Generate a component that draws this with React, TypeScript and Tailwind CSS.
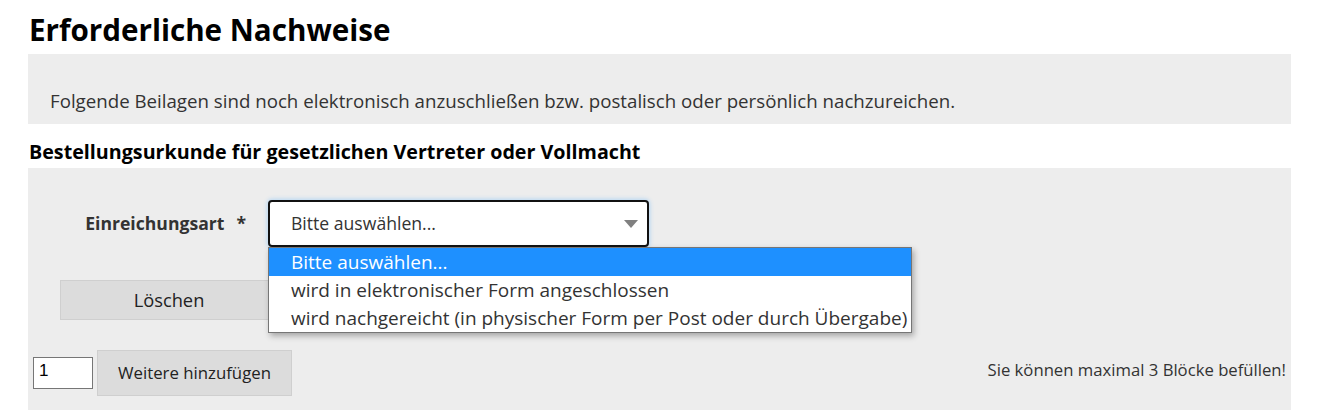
const options = [
  "Bitte auswählen...",
  "wird in elektronischer Form angeschlossen",
  "wird nachgereicht (in physischer Form per Post oder durch Übergabe)",
];

export default function App() {
  return (
    <div className="w-[1324px] h-[410px] overflow-hidden bg-white pl-[28px] pr-[33px] font-['Open_Sans',sans-serif] text-[#333]">
      <h1 className="pt-[12px] h-[54px] pl-px text-[29.6px] leading-[36px] font-bold text-black">
        Erforderliche Nachweise
      </h1>

      <div className="h-[70px] bg-[#ededed] pl-[22px] pt-[35px] text-[18.7px] leading-[24px]">
        Folgende Beilagen sind noch elektronisch anzuschließen bzw. postalisch oder persönlich nachzureichen.
      </div>

      <h2 className="h-[44px] pl-px pt-[16px] text-[19.7px] leading-[24px] font-bold text-black">
        Bestellungsurkunde für gesetzlichen Vertreter oder Vollmacht
      </h2>

      <div className="h-[250px] bg-[#ededed] pt-[32px]">
        <div className="flex items-center">
          <label className="w-[240px] pr-[22px] text-right text-[17.6px] font-bold">
            Einreichungsart<span className="ml-[12px]">*</span>
          </label>
          <div className="relative">
            <div className="flex h-[47px] w-[381px] items-center justify-between rounded-[4px] border-2 border-[#111] bg-white pl-[21px] pr-[8px] text-[17.6px] shadow-[0_0_4px_1px_#b5d6f3]">
              <span>Bitte auswählen...</span>
              <svg width="16" height="10" viewBox="0 0 16 10" className="text-[#808080]">
                <path d="M1 1h14L8 9z" fill="currentColor" />
              </svg>
            </div>
            <ul className="absolute left-0 top-full z-10 w-[644px] border border-[#767676] bg-white text-[19px] leading-[28px] shadow-[2px_3px_6px_rgba(0,0,0,0.3)]">
              {options.map((o, i) => (
                <li
                  key={o}
                  className={i === 0 ? "bg-[#1e90ff] pl-[22px] text-white" : "pl-[22px]"}
                >
                  {o}
                </li>
              ))}
            </ul>
          </div>
        </div>

        <div className="mt-[33px] pl-[32px]">
          <button className="h-[40px] w-[218px] border border-[#cfcfcf] bg-[#dcdcdc] text-[18.3px] text-[#222]">
            Löschen
          </button>
        </div>

        <div className="mt-[30px] flex items-center pl-[5px] pr-[5px]">
          <input
            defaultValue="1"
            className="h-[32px] w-[60px] border border-[#767676] bg-white px-[5px] pb-[5px] font-['Liberation_Sans',sans-serif] text-[17px] text-black"
          />
          <button className="ml-[4px] h-[46px] w-[195px] border border-[#cfcfcf] bg-[#dcdcdc] text-[16.8px] text-[#222]">
            Weitere hinzufügen
          </button>
          <span className="ml-auto mb-[6px] text-[16.7px]">Sie können maximal 3 Blöcke befüllen!</span>
        </div>
      </div>
    </div>
  );
}
